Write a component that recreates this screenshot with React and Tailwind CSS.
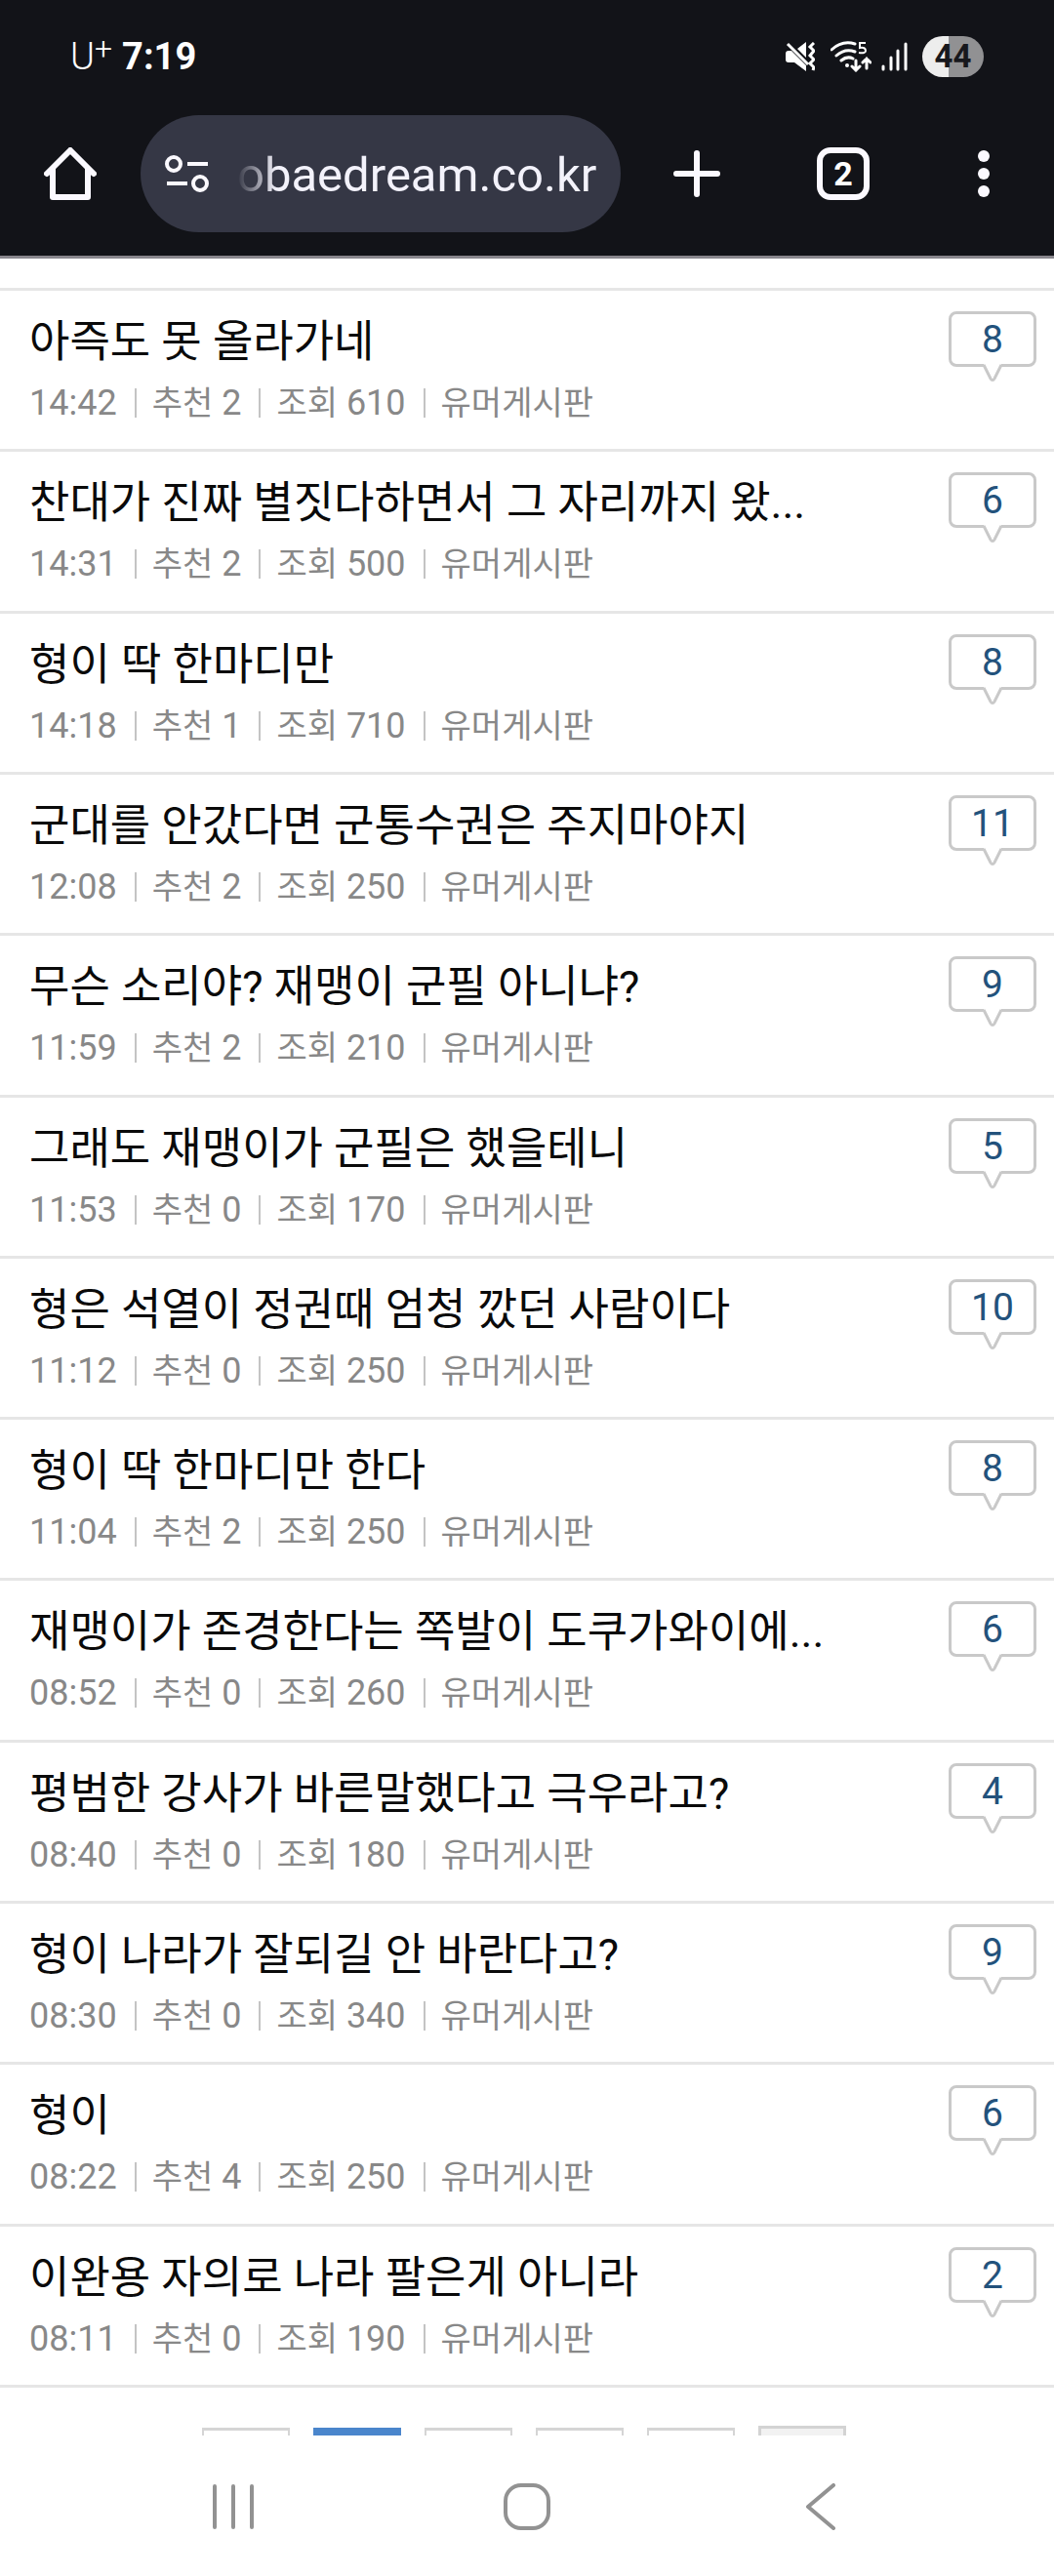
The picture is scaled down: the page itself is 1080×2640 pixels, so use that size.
import { clsx } from "clsx";

const POSTS = [
  { title: "아즉도 못 올라가네", time: "14:42", likes: 2, views: 610, comments: 8 },
  { title: "찬대가 진짜 별짓다하면서 그 자리까지 왔...", time: "14:31", likes: 2, views: 500, comments: 6 },
  { title: "형이 딱 한마디만", time: "14:18", likes: 1, views: 710, comments: 8 },
  { title: "군대를 안갔다면 군통수권은 주지마야지", time: "12:08", likes: 2, views: 250, comments: 11 },
  { title: "무슨 소리야? 재맹이 군필 아니냐?", time: "11:59", likes: 2, views: 210, comments: 9 },
  { title: "그래도 재맹이가 군필은 했을테니", time: "11:53", likes: 0, views: 170, comments: 5 },
  { title: "형은 석열이 정권때 엄청 깠던 사람이다", time: "11:12", likes: 0, views: 250, comments: 10 },
  { title: "형이 딱 한마디만 한다", time: "11:04", likes: 2, views: 250, comments: 8 },
  { title: "재맹이가 존경한다는 쪽발이 도쿠가와이에...", time: "08:52", likes: 0, views: 260, comments: 6 },
  { title: "평범한 강사가 바른말했다고 극우라고?", time: "08:40", likes: 0, views: 180, comments: 4 },
  { title: "형이 나라가 잘되길 안 바란다고?", time: "08:30", likes: 0, views: 340, comments: 9 },
  { title: "형이", time: "08:22", likes: 4, views: 250, comments: 6 },
  { title: "이완용 자의로 나라 팔은게 아니라", time: "08:11", likes: 0, views: 190, comments: 2 },
];

const PAGES = [
  { id: 1, kind: "normal" },
  { id: 2, kind: "active" },
  { id: 3, kind: "normal" },
  { id: 4, kind: "normal" },
  { id: 5, kind: "normal" },
  { id: "next", kind: "next" },
];

function StatusBar() {
  return (
    <div className="flex h-[118px] items-center justify-between px-[72px] pb-[2px]">
      <div className="flex items-center gap-[10px]">
        <span className="flex items-start text-[38px] leading-[44px] font-light">
          U<sup className="top-0 text-[32px] leading-[28px]">+</sup>
        </span>
        <span className="text-[38px] leading-[44px] font-bold">7:19</span>
      </div>
      <div className="flex items-center">
        <svg className="mr-4 h-[30px] w-[30px]" viewBox="0 0 30 30" fill="none" aria-hidden="true">
          <path d="M0 12q0-3 3-3h3l15 15v6L9 21H3q-3 0-3-3zM12 7l9-7v16z" fill="white" />
          <path d="M2 2l21 21" stroke="white" strokeWidth="3" />
          <path d="M29 1l-4 4 4 4-4 5 4 4-4 4 4 4-1 3" stroke="white" strokeWidth="3" />
        </svg>
        <svg className="mr-[10px] h-8 w-[42px]" viewBox="0 0 42 32" fill="none" aria-hidden="true">
          <path d="M1 9Q12-1 25 3M6 15q9-8 19-4M11 20q6-5 12-2" stroke="white" strokeWidth="3" strokeLinecap="round" />
          <circle cx="17" cy="25" r="2" fill="white" />
          <path d="M36 2h-6v5q6-1 6 3 0 3-7 2" stroke="white" strokeWidth="2" />
          <path d="M26 20v10m-4-4l4 4 4-4M37 28V18m-4 4l4-4 4 4" stroke="white" strokeWidth="3" strokeLinecap="round" />
        </svg>
        <svg className="mr-[15px] h-[30px] w-[27px]" viewBox="0 0 27 30" aria-hidden="true">
          <path d="M2 25v3M10 16v12M17 9v19M25 2v26" stroke="white" strokeWidth="3" strokeLinecap="round" />
        </svg>
        <span className="flex h-[42px] w-[63px] items-center justify-center rounded-full bg-linear-to-r from-[#ededed] from-43% to-[#919193] to-43% text-[33px] font-bold text-[#17181d]">
          44
        </span>
      </div>
    </div>
  );
}

function Toolbar() {
  return (
    <div className="flex items-start pb-6">
      <button type="button" aria-label="Home" className="flex h-[120px] w-36 items-center justify-center">
        <svg className="h-[54px] w-[54px]" viewBox="0 0 54 54" fill="none" aria-hidden="true">
          <path d="M3 27L27 3l24 24M9 22v29h36V22" stroke="#fbf9ff" strokeWidth="6" strokeLinecap="round" strokeLinejoin="round" />
        </svg>
      </button>
      <div className="flex h-[120px] w-[492px] items-center gap-7 rounded-full bg-[#353745] pr-5 pl-[25px]">
        <button type="button" aria-label="Site settings" className="shrink-0">
          <svg className="h-[40px] w-[46px]" viewBox="0 0 46 40" fill="none" stroke="#fbf9ff" strokeWidth="4" aria-hidden="true">
            <circle cx="9" cy="10" r="7" />
            <circle cx="36" cy="30" r="7" />
            <path d="M23 10h21M2 30h21" />
          </svg>
        </button>
        <input
          type="text"
          aria-label="Address"
          readOnly
          value="obaedream.co.kr"
          className="min-w-0 flex-1 bg-transparent mask-linear-[90deg,transparent_0,black_40px] pt-1 text-[49px] text-[#f3f2fb] outline-none"
        />
      </div>
      <div className="flex flex-1 items-center">
        <button type="button" aria-label="New tab" className="flex h-[120px] w-[156px] items-center justify-center">
          <svg className="h-12 w-12" viewBox="0 0 48 48" aria-hidden="true">
            <path d="M24 3v42M3 24h42" stroke="#fbf9ff" strokeWidth="6" strokeLinecap="round" />
          </svg>
        </button>
        <button type="button" aria-label="Tabs" className="flex h-[120px] flex-1 items-center justify-center">
          <span className="flex h-[54px] w-[54px] items-center justify-center rounded-[14px] border-6 border-[#fbf9ff] text-[34px] font-bold">
            2
          </span>
        </button>
        <button type="button" aria-label="More" className="flex h-[120px] w-36 items-center justify-center">
          <svg className="h-12 w-3" viewBox="0 0 12 48" fill="#fbf9ff" aria-hidden="true">
            <circle cx="6" cy="6" r="6" />
            <circle cx="6" cy="24" r="6" />
            <circle cx="6" cy="42" r="6" />
          </svg>
        </button>
      </div>
    </div>
  );
}

function CommentBadge({ count }) {
  return (
    <a
      href="#comments"
      className="relative mt-[21px] flex h-[57px] w-[90px] shrink-0 items-center justify-center rounded-lg border-3 border-[#c9c9c9] pt-[2px] text-[39px] leading-none text-[#23527c]"
    >
      {count}
      <svg className="absolute top-[51px] left-[31px] h-[18px] w-[22px]" viewBox="0 0 22 18" aria-hidden="true">
        <path d="M2 0h18l-7 15q-2 3-4 0z" fill="white" />
        <path d="M2 1l7 14q2 3 4 0l7-14" fill="none" stroke="#c9c9c9" strokeWidth="3" />
      </svg>
    </a>
  );
}

function Meta({ label, value }) {
  return (
    <span className="ml-[18px] border-l-2 border-[#c4c4c4] pl-4 leading-[30px]">
      {label}
      {value !== undefined ? <span className="text-[36px] leading-[30px]"> {value}</span> : null}
    </span>
  );
}

function Post({ post }) {
  return (
    <li className="flex items-start justify-between border-b-3 border-[#e6e6e6] pr-[18px] pl-[30px]">
      <a href="#post" className="min-w-0 pt-[22px]">
        <div className="truncate text-[45px] leading-[62px] text-[#0a0a0a]">{post.title}</div>
        <div className="flex items-center text-[34px] leading-[62px] text-[#888]">
          <span className="text-[36px]">{post.time}</span>
          <Meta label="추천" value={post.likes} />
          <Meta label="조회" value={post.views} />
          <Meta label="유머게시판" />
        </div>
      </a>
      <CommentBadge count={post.comments} />
    </li>
  );
}

function Pagination() {
  return (
    <nav aria-label="Pages" className="flex h-[49px] items-end justify-center gap-6 pr-[6px]">
      {PAGES.map((p) => (
        <a
          key={p.id}
          href="#page"
          aria-label={`Page ${p.id}`}
          className={clsx(
            "w-[90px] border-t-3",
            p.kind === "normal" && "h-2 border-x-2 border-[#d5d5d5]",
            p.kind === "active" && "h-2 border-[#4a86cc] bg-[#4a86cc]",
            p.kind === "next" && "h-[10px] border-x-3 border-[#d3d3d3] bg-[#f2f2f2]",
          )}
        />
      ))}
    </nav>
  );
}

function NavBar() {
  return (
    <div className="grid h-36 grid-cols-3 items-center px-[88px] pt-2 pb-[6px]">
      <button type="button" aria-label="Recents" className="flex justify-center">
        <svg className="h-12 w-12" viewBox="0 0 48 48" fill="none" stroke="#929292" strokeWidth="4" strokeLinecap="round" aria-hidden="true">
          <path d="M5 3v42M24 3v42M43 3v42" />
        </svg>
      </button>
      <button type="button" aria-label="Home screen" className="flex justify-center">
        <svg className="h-12 w-12" viewBox="0 0 48 48" fill="none" stroke="#929292" strokeWidth="4" aria-hidden="true">
          <rect x="2" y="2" width="44" height="44" rx="16" />
        </svg>
      </button>
      <button type="button" aria-label="Back" className="flex justify-center">
        <svg className="h-12 w-8" viewBox="0 0 32 48" fill="none" stroke="#929292" strokeWidth="4" strokeLinecap="round" strokeLinejoin="round" aria-hidden="true">
          <path d="M29 2L3 24l26 22" />
        </svg>
      </button>
    </div>
  );
}

export default function App() {
  return (
    <div className="flex min-h-screen flex-col bg-white font-[Roboto,'Noto_Sans_CJK_KR',sans-serif]">
      <header className="border-b-3 border-[#88868d] bg-[#121318] text-white">
        <StatusBar />
        <Toolbar />
      </header>
      <main className="flex flex-1 flex-col pt-[30px]">
        <ul className="grid flex-1 auto-rows-fr border-t-3 border-[#e6e6e6]">
          {POSTS.map((post) => (
            <Post key={post.time} post={post} />
          ))}
        </ul>
        <Pagination />
      </main>
      <NavBar />
    </div>
  );
}
